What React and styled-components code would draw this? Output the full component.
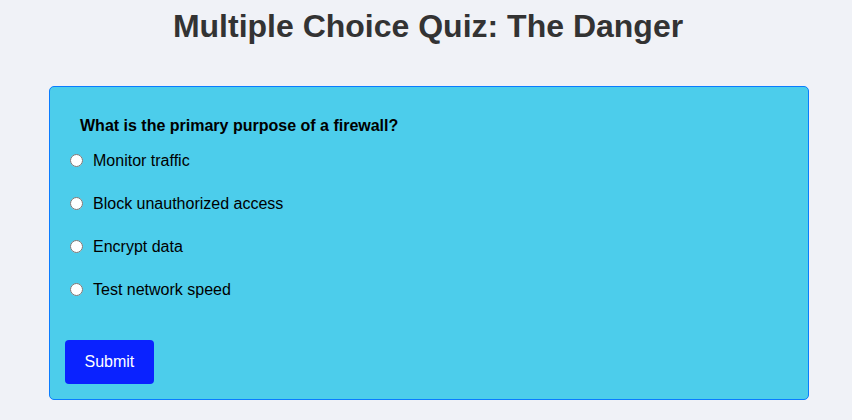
import React, { useState } from 'react';
import styled, { createGlobalStyle } from 'styled-components';

const GlobalStyle = createGlobalStyle`
  body {
    margin: 0;
    padding: 8px 0 0;
    background: #f0f2f7;
    font-family: "Liberation Sans", Arial, sans-serif;
  }
`;

const Title = styled.h1`
  margin: 0 6px 41px 10px;
  font-size: 32px;
  line-height: 37px;
  font-weight: bold;
  color: #333;
  text-align: center;
`;

const Card = styled.form`
  box-sizing: border-box;
  width: 760px;
  margin-left: 49px;
  height: 314px;
  padding: 15px;
  background: #4ccdeb;
  border: 1px solid #0a7cff;
  border-radius: 5px;
`;

const Question = styled.div`
  padding: 15px 15px 17px;
  font-size: 16px;
  line-height: 18px;
  font-weight: bold;
  color: #000;
`;

const Options = styled.div`
  display: flex;
  flex-direction: column;
  gap: 25px;
`;

const Option = styled.label`
  display: flex;
  align-items: center;
  font-size: 16px;
  line-height: 18px;
  color: #000;
  cursor: pointer;

  input {
    width: 13px;
    height: 13px;
    margin: 0 10px 2px 5px;
  }
`;

const SubmitButton = styled.button`
  margin-top: 41px;
  padding: 12px 19.5px;
  font-family: inherit;
  font-size: 16px;
  line-height: 20px;
  color: #fff;
  background: #0a22ff;
  border: none;
  border-radius: 4px;
  cursor: pointer;
`;

const choices = ['Monitor traffic', 'Block unauthorized access', 'Encrypt data', 'Test network speed'];

export default function App() {
  const [picked, setPicked] = useState(null);

  return (
    <>
      <GlobalStyle />
      <Title>Multiple Choice Quiz: The Danger</Title>
      <Card onSubmit={e => e.preventDefault()}>
        <Question>What is the primary purpose of a firewall?</Question>
        <Options>
          {choices.map(c => (
            <Option key={c}>
              <input type="radio" name="q1" checked={picked === c} onChange={() => setPicked(c)} />
              {c}
            </Option>
          ))}
        </Options>
        <SubmitButton type="submit">Submit</SubmitButton>
      </Card>
    </>
  );
}
